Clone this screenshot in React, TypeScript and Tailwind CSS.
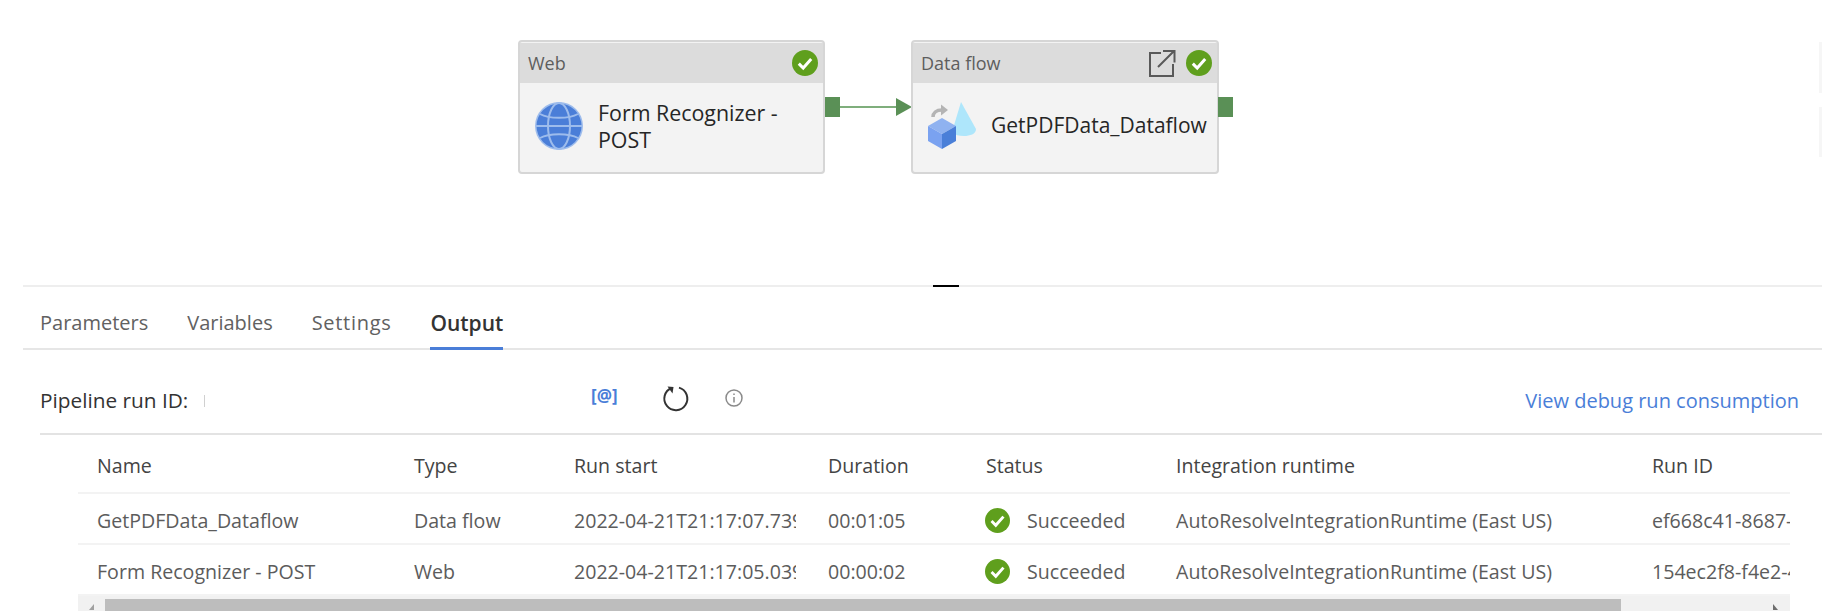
const FONT = "font-['Open_Sans','Noto_Sans',sans-serif]";

const CheckBadge = ({ className }: { className: string }) => (
  <svg viewBox="0 0 26 26" className={className}>
    <circle cx="13" cy="13" r="13" fill="#5f9f1d" />
    <path d="M6.8 13.6l4.4 4.4 8-9" fill="none" stroke="#fff" strokeWidth="3" />
  </svg>
);

const GlobeIcon = () => (
  <svg viewBox="0 0 48 48" className="w-12 h-12 shrink-0">
    <circle cx="24" cy="24" r="24" fill="#9dbcec" />
    <circle cx="24" cy="24" r="22.5" fill="#4a7ed8" />
    <g fill="none" stroke="#9dbcec" strokeWidth="2">
      <ellipse cx="24" cy="24" rx="11" ry="23" />
      <path d="M1 24h46M5 12c9 5 29 5 38 0M5 36c9-5 29-5 38 0" />
    </g>
  </svg>
);

const DataflowIcon = () => (
  <svg viewBox="0 0 48 47" className="w-12 h-[47px] shrink-0">
    <path d="M33 0L48 27c0 5-6 7-12 7-5 0-9-1-12-4z" fill="#aee6fb" />
    <path d="M5 15c0-4 3-7 9-7" fill="none" stroke="#b4b4b4" strokeWidth="3.5" />
    <path d="M13 2.5l7 5.5-7 5.500z" fill="#b4b4b4" />
    <path d="M0 24l14-8 14 8-14 8z" fill="#8fb2f0" />
    <path d="M0 24v15l14 8V32z" fill="#7aa2f0" />
    <path d="M28 24v15l-14 8V32z" fill="#4a7fd8" />
  </svg>
);

const ExportIcon = () => (
  <svg viewBox="0 0 28 28" className="w-7 h-7" fill="none" stroke="#595959" strokeWidth="2">
    <path d="M13 4H2v23h23V15" />
    <path d="M10 18L26 2M15 2h11.5v11.5" />
  </svg>
);

const Port = ({ className }: { className: string }) => (
  <div className={`absolute w-[15px] h-5 bg-[#5a9056] ${className}`} />
);

const PipelineNode = ({
  type,
  label,
  icon,
  className,
  gap,
  labelSize,
  showExport,
}: {
  type: string;
  label: string;
  icon: React.ReactNode;
  className: string;
  gap: string;
  labelSize: string;
  showExport?: boolean;
}) => (
  <div
    className={`absolute top-[40px] h-[134px] rounded border-2 border-[#d6d6d6] bg-[#f3f3f3] flex flex-col ${className}`}
  >
    <div className="h-10 mt-px bg-[#dcdcdc] flex items-center pl-2 pr-[5px] shrink-0">
      <span className="text-[18px] text-[#5e5e5e] flex-1">{type}</span>
      {showExport && (
        <span className="mr-[10px]">
          <ExportIcon />
        </span>
      )}
      <CheckBadge className="w-[26px] h-[26px]" />
    </div>
    <div className={`flex-1 flex items-center pl-[15px] pb-1 ${gap}`}>
      {icon}
      <span className={`leading-[27px] text-[#262626] whitespace-pre-line ${labelSize}`}>{label}</span>
    </div>
  </div>
);

const COLS = 'grid grid-cols-[317px_160px_254px_158px_190px_476px_138px] pl-[19px]';

const rows = [
  {
    name: 'GetPDFData_Dataflow',
    type: 'Data flow',
    start: '2022-04-21T21:17:07.739Z',
    duration: '00:01:05',
    runId: 'ef668c41-8687-4a2b',
  },
  {
    name: 'Form Recognizer - POST',
    type: 'Web',
    start: '2022-04-21T21:17:05.039Z',
    duration: '00:00:02',
    runId: '154ec2f8-f4e2-4d17',
  },
];

export default function App() {
  return (
    <div className={`w-[1842px] h-[615px] bg-white overflow-hidden flex flex-col ${FONT}`}>
      <div className="relative h-[285px] shrink-0">
        <PipelineNode
          type="Web"
          label={'Form Recognizer -\nPOST'}
          icon={<GlobeIcon />}
          className="left-[518px] w-[307px]"
          gap="gap-[15px]"
          labelSize="text-[21.400px]"
        />
        <Port className="left-[825px] top-[97px]" />
        <div className="absolute left-[840px] top-[106px] w-[58px] h-0.5 bg-[#7fae7c]" />
        <svg viewBox="0 0 16 18" className="absolute left-[896px] top-[98px] w-4 h-[18px]">
          <path d="M0 0l16 9-16 9z" fill="#5a9056" />
        </svg>
        <PipelineNode
          type="Data flow"
          label="GetPDFData_Dataflow"
          icon={<DataflowIcon />}
          className="left-[911px] w-[308px]"
          gap="gap-[15px]"
          labelSize="text-[21px]"
          showExport
        />
        <Port className="left-[1218px] top-[97px]" />
        <div className="absolute left-[1819px] top-[42px] w-[3px] h-[51px] bg-[#f6f6f6]" />
        <div className="absolute left-[1819px] top-[107px] w-[3px] h-[50px] bg-[#f6f6f6]" />
      </div>

      <div className="relative ml-[23px] mr-[20px] border-t-2 border-[#eeeeee] flex flex-col">
        <div className="absolute left-[910px] -top-0.5 w-[26px] h-0.5 bg-black" />

        <div className="h-[63px] border-b-2 border-[#e6e6e6] flex items-end gap-[39px] pl-[17px] text-[20px] leading-[28px] text-[#616161]">
          <span className="pb-[11px]">Parameters</span>
          <span className="pb-[11px]">Variables</span>
          <span className="pb-[11px] tracking-[0.7px]">Settings</span>
          <span className="pb-[10px] border-b-[3px] border-[#4a7ed8] -mb-0.5 text-[21px] font-semibold text-[#333333]">
            Output
          </span>
        </div>

        <div className="ml-[17px] h-[85px] pt-[18px] border-b-2 border-[#e3e3e3] flex items-center text-[20px]">
          <span className="text-[#333333] text-[20.800px] w-[164px]">Pipeline run ID:</span>
          <span className="w-px h-3 bg-[#d0d0d0]" />
          <span className="ml-[386px] w-[28px] text-[17px] font-bold text-[#4a7ed8] -mt-[10px]">[@]</span>
          <svg viewBox="0 0 28 28" className="ml-[43px] w-7 h-7 -mt-[6px]" fill="none" stroke="#333333" strokeWidth="2">
            <path d="M17 3.6a11.5 11.5 0 1 1-7.5.4" />
            <path d="M5.5 2.5l6 .5-1 6.500z" fill="#333333" strokeWidth="0" />
          </svg>
          <svg viewBox="0 0 18 18" className="ml-[35px] w-[18px] h-[18px] -mt-[6px]" fill="none" stroke="#8a8a8a" strokeWidth="1.5">
            <circle cx="9" cy="9" r="8" />
            <path d="M9 8v5.500M9 4.500v1.600" />
          </svg>
          <span className="ml-auto mr-[23px] text-[#4a7ed8]">View debug run consumption</span>
        </div>

        <div className="ml-[55px] w-[1712px] overflow-hidden text-[19.600px] text-[#5c5c5c]">
          <div className={`${COLS} pt-1 h-[59px] items-center border-b-2 border-[#f3f3f3] text-[#444444]`}>
            <span>Name</span>
            <span>Type</span>
            <span>Run start</span>
            <span>Duration</span>
            <span>Status</span>
            <span>Integration runtime</span>
            <span>Run ID</span>
          </div>
          {rows.map((row) => (
            <div
              key={row.name}
              className={`${COLS} pt-1 h-[51px] items-center border-b-2 border-[#f3f3f3] last:border-b-0 last:pt-0.5 last:h-[49px]`}
            >
              <span>{row.name}</span>
              <span>{row.type}</span>
              <span className="w-[222px] overflow-hidden whitespace-nowrap">{row.start}</span>
              <span>{row.duration}</span>
              <span className="flex items-center gap-[17px]">
                <CheckBadge className="w-[25px] h-[25px] -ml-px" />
                Succeeded
              </span>
              <span className="whitespace-nowrap">AutoResolveIntegrationRuntime (East US)</span>
              <span className="overflow-hidden whitespace-nowrap">{row.runId}</span>
            </div>
          ))}
          <div className="h-[15px] bg-[#f1f1f1] flex items-end">
            <span className="w-[27px] pb-px flex justify-center">
              <svg viewBox="0 0 5 6" className="w-[5px] h-1.5">
                <path d="M5 0v6L0 6z" fill="#a0a0a0" />
              </svg>
            </span>
            <div className="h-3 w-[1516px] bg-[#bdbdbd]" />
            <span className="ml-auto mr-3 pb-px flex">
              <svg viewBox="0 0 5 6" className="w-[5px] h-1.5">
                <path d="M0 0v6h5z" fill="#6e6e6e" />
              </svg>
            </span>
          </div>
        </div>
      </div>
    </div>
  );
}
